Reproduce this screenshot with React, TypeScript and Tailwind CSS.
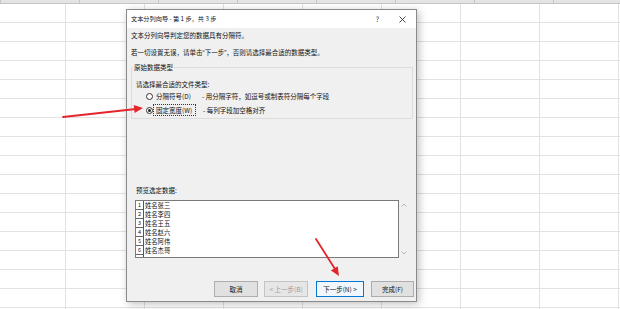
import React from "react";

const ROWS = 17;
const COLS = 8;

function Sheet() {
  return (
    <div className="flex flex-col">
      <div className="flex h-[4px] box-border border-b border-[#c6c6c6] bg-[#e4e4e4]">
        <div className="w-[66px] box-border border-r border-[#c6c6c6]" />
        {Array.from({ length: COLS }).map((_, i) => (
          <div key={i} className="w-[79px] shrink-0 box-border border-r border-[#c6c6c6]" />
        ))}
      </div>
      {Array.from({ length: ROWS }).map((_, r) => (
        <div key={r} className="flex h-[19px] box-border border-b border-[#e2e2e2]">
          <div className="w-[66px] shrink-0 box-border border-r border-[#e2e2e2]" />
          {Array.from({ length: COLS }).map((_, i) => (
            <div key={i} className="w-[79px] shrink-0 box-border border-r border-[#e2e2e2]" />
          ))}
        </div>
      ))}
    </div>
  );
}

function Radio({ checked }: { checked?: boolean }) {
  return (
    <span className="w-[7px] h-[7px] shrink-0 rounded-full box-border border border-[#333] bg-white flex items-center justify-center">
      {checked && <span className="w-[3px] h-[3px] rounded-full bg-[#222]" />}
    </span>
  );
}

const names = ["姓名张三", "姓名李四", "姓名王五", "姓名赵六", "姓名阿伟", "姓名杰哥"];

const Q = ({ c }: { c: string }) => (
  <span style={{ fontFamily: '"Liberation Sans", sans-serif' }}>{c}</span>
);

function Dialog() {
  return (
    <div className="absolute left-[126px] top-[9px] w-[291px] h-[293px] box-border border border-[#8a8a8a] bg-[#f0f0f0] shadow-[2px_2px_8px_rgba(0,0,0,0.25)] flex flex-col text-[#111]">
      {/* title bar */}
      <div className="h-[18px] bg-white flex items-center pl-[4px]">
        <span className="text-[6.2px] leading-[10px]">文本分列向导 - 第 1 步，共 3 步</span>
        <span className="ml-auto text-[7px] leading-[10px] text-[#333] mr-[20px]">?</span>
        <svg width="7" height="7" viewBox="0 0 7 7" className="mr-[10px]">
          <path d="M0.5 0.5 L6.5 6.5 M6.5 0.5 L0.5 6.5" stroke="#333" strokeWidth="0.9" />
        </svg>
      </div>
      {/* body */}
      <div className="flex flex-col pl-[4px] text-[6.5px] leading-[10px]">
        <div className="mt-[2px]">文本分列向导判定您的数据具有分隔符。</div>
        <div className="mt-[7px]">
          若一切设置无误，请单击<Q c="“" />下一步<Q c="”" />，否则请选择最合适的数据类型。
        </div>
        <div className="mt-[9px] w-[282px] h-[52px] box-border border border-[#dcdcdc] flex flex-col">
          <div className="-mt-[6px] ml-[1px] px-[1px] w-fit bg-[#f0f0f0]">原始数据类型</div>
          <div className="mt-[7px] ml-[4px]">请选择最合适的文件类型:</div>
          <div className="mt-[2px] ml-[14px] flex items-center h-[10px]">
            <Radio />
            <span className="ml-[3px] w-[46px]">分隔符号(D)</span>
            <span>- 用分隔字符，如逗号或制表符分隔每个字段</span>
          </div>
          <div className="mt-[4px] ml-[14px] flex items-center h-[10px]">
            <Radio checked />
            <span className="w-[43px] h-[12px] box-border border border-dotted border-[#333] pl-[2px] flex items-center">固定宽度(W)</span>
            <span className="ml-[7px]">- 每列字段加空格对齐</span>
          </div>
        </div>
        <div className="mt-[66px] ml-[5px]">预览选定数据:</div>
        <div className="mt-[5px] ml-[4px] flex">
          <div className="w-[264px] h-[58px] box-border border border-[#7a7a7a] bg-white flex">
            <div className="w-[8px] h-full box-border border-r border-[#555] flex flex-col">
              {names.map((_, i) => (
                <div key={i} className="h-[9px] box-border border-b border-[#666] text-[5.5px] leading-[8px] text-center">
                  {i + 1}
                </div>
              ))}
            </div>
            <div className="flex flex-col pl-[1px]">
              {names.map((n) => (
                <div key={n} className="h-[9px] text-[6.3px] leading-[9px]">
                  {n}
                </div>
              ))}
            </div>
          </div>
          <div className="w-[10px] h-[58px] flex flex-col items-center justify-between py-[3px]">
            <svg width="6" height="4" viewBox="0 0 6 4">
              <path d="M0.5 3.5 L3 1 L5.5 3.5" fill="none" stroke="#a8a8a8" strokeWidth="0.8" />
            </svg>
            <svg width="6" height="4" viewBox="0 0 6 4">
              <path d="M0.5 0.5 L3 3 L5.5 0.5" fill="none" stroke="#a8a8a8" strokeWidth="0.8" />
            </svg>
          </div>
        </div>
        <div className="mt-[23px] ml-[83px] flex items-center">
          <div className="w-[44px] h-[16px] box-border border border-[#adadad] bg-[#e1e1e1] flex items-center justify-center">取消</div>
          <div className="ml-[6px] w-[44px] h-[16px] box-border border border-[#c4c4c4] bg-[#e6e6e6] text-[#9a9a9a] flex items-center justify-center">&lt; 上一步(B)</div>
          <div className="ml-[8px] w-[48px] h-[16px] box-border border border-[#0078d7] bg-[#f2f7fc] flex items-center justify-center">下一步(N) &gt;</div>
          <div className="ml-[7px] w-[43px] h-[16px] box-border border border-[#adadad] bg-[#e1e1e1] flex items-center justify-center">完成(F)</div>
        </div>
      </div>
    </div>
  );
}

export default function App() {
  return (
    <div
      className="relative w-[620px] h-[309px] overflow-hidden bg-white"
      style={{ fontFamily: '"Noto Sans CJK SC", "Noto Sans", sans-serif' }}
    >
      <Sheet />
      <Dialog />
      <svg className="absolute left-0 top-0 pointer-events-none" width="620" height="309" viewBox="0 0 620 309">
        <line x1="63" y1="117" x2="136" y2="109" stroke="#e3262b" strokeWidth="1.8" strokeLinecap="round" />
        <polygon points="143,108 134.6,113 133.7,105" fill="#e3262b" />
        <line x1="316" y1="239" x2="335" y2="269" stroke="#e3262b" strokeWidth="1.8" strokeLinecap="round" />
        <polygon points="339,276 330.9,270.5 337.7,266.3" fill="#e3262b" />
      </svg>
    </div>
  );
}
